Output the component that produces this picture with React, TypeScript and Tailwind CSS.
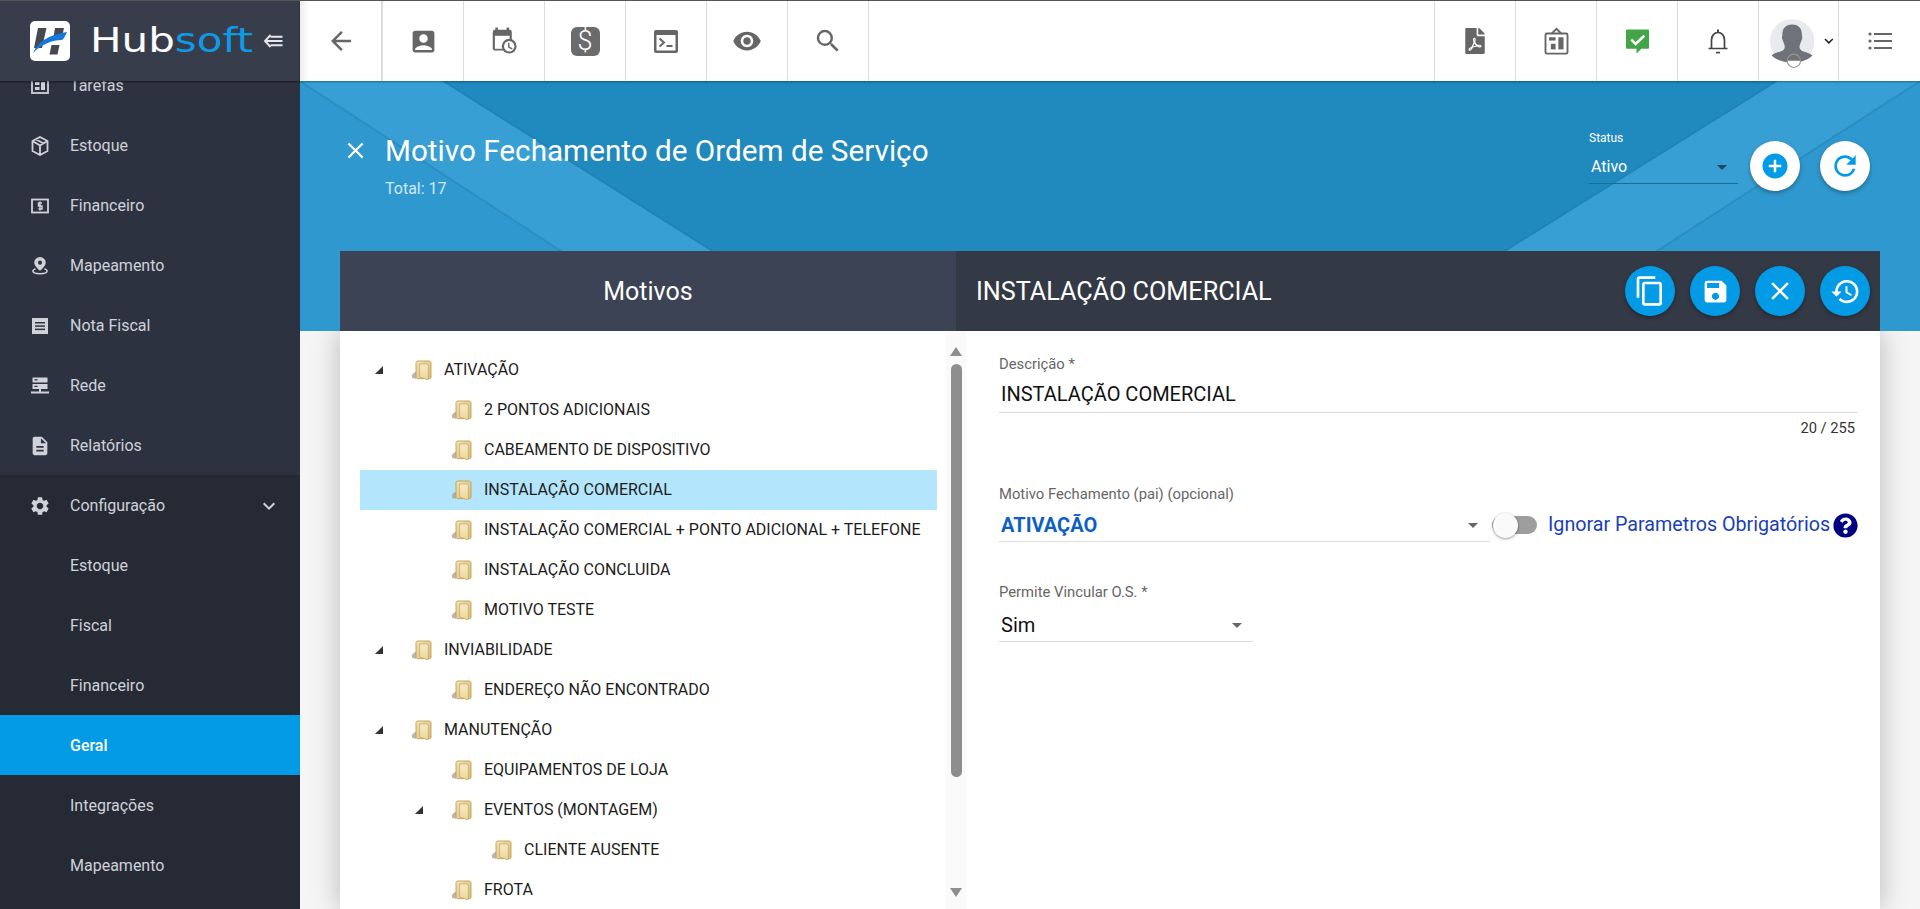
import React from "react";
import {
  MdAccountBox, MdVisibility, MdSearch, MdArrowBack, MdClose, MdExpandMore, MdSettings,
  MdDescription, MdAddCircle, MdRefresh, MdContentCopy, MdSave, MdHistory,
  MdArrowDropDown,
} from "react-icons/md";
import { FaFilePdf, FaQuestionCircle } from "react-icons/fa";

const Cal = () => (
  <svg viewBox="0 0 30 32" className="w-[26px] h-[28px]" fill="#666">
    <rect x="2" y="3" width="22" height="24" rx="2.5" />
    <rect x="5" y="0.5" width="3" height="5" /><rect x="18" y="0.5" width="3" height="5" />
    <rect x="4.5" y="10" width="17" height="15" fill="#fff" />
    <circle cx="21" cy="22" r="8.5" fill="#666" /><circle cx="21" cy="22" r="6" fill="#fff" />
    <path d="M20.5 18v5l4 2" fill="none" stroke="#666" strokeWidth="1.6" />
  </svg>
);
const Term = () => (
  <svg viewBox="0 0 24 23" className="w-6 h-[23px]">
    <rect width="24" height="23" rx="2" fill="#666" />
    <rect x="2.5" y="5" width="19" height="15.500" fill="#fff" />
    <path d="M5.500 8.500l4.500 4-4.500 4" fill="none" stroke="#666" strokeWidth="2" />
    <rect x="12.500" y="15" width="6" height="2" fill="#666" />
  </svg>
);
const Board = () => (
  <svg viewBox="0 0 26 30" className="w-[25px] h-[28px]" fill="none" stroke="#666" strokeWidth="2">
    <rect x="1.2" y="7" width="23.6" height="21.5" rx="1.5" />
    <path d="M8 7l5-5 5 5" />
    <g fill="#666" stroke="none"><rect x="5" y="11" width="7" height="3.5" /><rect x="7" y="18" width="5" height="6" /><rect x="15" y="11" width="5.5" height="13" /></g>
  </svg>
);
const Chat = () => (
  <svg viewBox="0 0 26 26" className="w-[25px] h-[25px]">
    <path d="M2 0.500h22a1 1 0 011 1v18a1 1 0 01-1 1h-7l-5 5v-5H2a1 1 0 01-1-1v-18a1 1 0 011-1z" fill="#43a547" />
    <path d="M6.500 11l4.500 4.500 9-8.500" fill="none" stroke="#fff" strokeWidth="2.600" />
  </svg>
);
const Bell = () => (
  <svg viewBox="0 0 20 25" className="w-5 h-[25px]" fill="none" stroke="#444" strokeWidth="1.700">
    <path d="M3.500 19v-8c0-4.500 2.800-7.500 6.500-7.500s6.500 3 6.500 7.500v8M0.500 19.500h19" />
    <path d="M10 0.500v3" strokeWidth="2" />
    <rect x="8" y="22.800" width="4" height="1.600" fill="#444" stroke="none" />
  </svg>
);
const Avatar = () => (
  <svg viewBox="0 0 50 55" className="w-[50px] h-[55px]">
    <ellipse cx="25" cy="25" rx="25" ry="25" fill="#e9eaee" />
    <path d="M25 6c8 0 11 5 11 11 0 2 1 3 0 6-1 2-1 3-2 5-1 3-1 5 1 7 3 2 10 3 13 6-4 4-11 8-23 8S6 45 2 41c3-3 10-4 13-6 2-2 2-4 1-7-1-2-1-3-2-5-1-3 0-4 0-6 0-6 3-11 11-11z" fill="#6f7379" />
    <path d="M19.500 47a7.500 7.500 0 0015 0z" fill="#fff" />
    <ellipse cx="27" cy="47" rx="7.500" ry="7.500" fill="none" stroke="#99948a" strokeWidth="1.200" />
  </svg>
);
const ListIcon = () => (
  <svg viewBox="0 0 24 18" className="w-[24px] h-[18px]" fill="#666">
    <circle cx="2" cy="2" r="1.6" /><circle cx="2" cy="9" r="1.6" /><circle cx="2" cy="16" r="1.6" />
    <rect x="6" y="1" width="18" height="2" /><rect x="6" y="8" width="18" height="2" /><rect x="6" y="15" width="18" height="2" />
  </svg>
);
const Logo = () => (
  <svg viewBox="0 0 40 40" className="w-10 h-10 shrink-0">
    <rect width="40" height="40" rx="5" fill="#fff" />
    <path d="M8 7h8.500l-4.500 20H4zM25 7h9l-2 9h-8.500zM21.500 24h8l-2 9.500h-8z" fill="#46494f" />
    <path d="M3 32C8 21 18 14 37 11c-2 4-3 6.500-5 8-10 0-20 4-29 13z" fill="#1577dd" />
  </svg>
);
const Collapse = () => (
  <svg viewBox="0 0 20 14" className="w-[21px] h-[14px]" fill="none" stroke="#e5e7eb" strokeWidth="1.900">
    <path d="M7 1L1.500 7 7 13M2 7h17M7 2.800h12M7 11.200h12" />
  </svg>
);

const Folder = () => (
  <svg viewBox="0 0 21 20" className="w-[21px] h-5 shrink-0 -ml-[1px]">
    <defs>
      <linearGradient id="fg" x1="0" y1="0" x2="1" y2="1"><stop offset="0" stopColor="#f3e3b2" /><stop offset="1" stopColor="#d9bb72" /></linearGradient>
      <linearGradient id="fh" x1="0" y1="0" x2="0" y2="1"><stop offset="0" stopColor="#f6ebc8" /><stop offset="1" stopColor="#ecd699" /></linearGradient>
    </defs>
    <path d="M5 2.500C5 1.500 6 1 7 1h11c1 0 2 .6 2 2v14c0 1-.8 1.600-1.600 1.600H7C6 18.600 5 18 5 17z" fill="url(#fg)" stroke="#bf9f58" strokeWidth=".9" />
    <path d="M8.500 4h7.500c.8 0 1.300.5 1.300 1.300v14c0 .4-.3.7-.7.4L10 17.500c-.8-.3-1.500-.8-1.500-1.600z" fill="url(#fh)" stroke="#c4a35c" strokeWidth=".7" />
    <path d="M1 15.500c.6-2 2.500-3.500 4-3.500v6.500H2.500C1.300 18.500.7 17 1 15.500z" fill="#a9a394" opacity=".8" />
  </svg>
);

const Tri = () => (
  <svg viewBox="0 0 8 8" className="w-2 h-2"><path d="M8 0v8H0z" fill="#333" /></svg>
);

const toolbarLeft = [
  <MdAccountBox key="a" className="w-[29px] h-[29px] text-[#666]" />,
  <Cal key="b" />,
  <div key="c" className="w-[29px] h-[29px] rounded-[6px] bg-[#6b6b6b] flex items-center justify-center text-white text-[27px] font-light leading-none">$</div>,
  <Term key="d" />,
  <MdVisibility key="e" className="w-[30px] h-[30px] text-[#666]" />,
  <MdSearch key="f" className="w-[30px] h-[30px] text-[#666]" />,
];
const toolbarRight = [
  <FaFilePdf key="a" className="w-[20px] h-[26px] text-[#666]" />,
  <Board key="b" />,
  <Chat key="c" />,
  <Bell key="d" />,
];

const SideIcon = ({ k }: { k: string }) => {
  const c = "w-[18px] h-[18px]";
  if (k === "tarefas") return (
    <svg viewBox="0 0 18 18" className={c} fill="none" stroke="#cfd2d9" strokeWidth="1.8"><rect x="1" y="2" width="16" height="14" /><g fill="#cfd2d9" stroke="none"><rect x="4" y="5" width="4.500" height="3" /><rect x="4" y="10" width="4.500" height="3" /><rect x="10" y="5" width="4" height="8" /></g></svg>
  );
  if (k === "estoque") return (
    <svg viewBox="0 0 18 20" className="w-[18px] h-5" fill="none" stroke="#cfd2d9" strokeWidth="1.8"><path d="M9 1l7.500 4v10L9 19l-7.500-4V5zM1.500 5L9 9.500 16.500 5M9 9.500V19M5 3.200l7.500 4.300" /></svg>
  );
  if (k === "fin") return (
    <svg viewBox="0 0 18 18" className={c} fill="none" stroke="#cfd2d9" strokeWidth="1.800"><rect x="1" y="2.500" width="16" height="13" /><path d="M11 6H7.500v3H11v3H7.500M9 4.500v9" strokeWidth="1.400" /></svg>
  );
  if (k === "map") return (
    <svg viewBox="0 0 18 20" className="w-[16px] h-[19px]">
      <path d="M9 0.500a6.500 6.500 0 00-6.500 6.500C2.500 11 9 16 9 16s6.500-5 6.500-9A6.500 6.500 0 009 .5z" fill="#cfd2d9" />
      <circle cx="9" cy="6.800" r="2.300" fill="#2d3240" />
      <path d="M4 13.500c-2 .8-3 1.800-3 2.800 0 1.800 3.500 3 8 3s8-1.200 8-3c0-1-1-2-3-2.800" fill="none" stroke="#cfd2d9" strokeWidth="1.700" />
    </svg>
  );
  if (k === "nota") return (
    <svg viewBox="0 0 18 18" className={c} fill="#cfd2d9"><rect x="1" y="1" width="16" height="16" /><g fill="#2d3240"><rect x="4" y="5" width="10" height="1.500" /><rect x="4" y="8.300" width="10" height="1.500" /><rect x="4" y="11.600" width="10" height="1.500" /></g></svg>
  );
  if (k === "rede") return (
    <svg viewBox="0 0 18 18" className={c} fill="#cfd2d9"><rect x="1.500" y="0.500" width="15" height="5" /><rect x="1.500" y="7" width="15" height="5" /><rect x="8" y="12" width="2" height="3" /><rect y="14.500" width="18" height="2" /><g fill="#2d3240"><rect x="3.500" y="2.200" width="3" height="1.200" /><rect x="3.500" y="8.800" width="3" height="1.200" /></g></svg>
  );
  if (k === "rel") return <MdDescription className="w-[22px] h-[22px] text-[#cfd2d9]" />;
  if (k === "conf") return <MdSettings className="w-[22px] h-[22px] text-[#cfd2d9]" />;
  return null;
};

const mainItems = [
  ["Tarefas", "tarefas"], ["Estoque", "estoque"], ["Financeiro", "fin"], ["Mapeamento", "map"],
  ["Nota Fiscal", "nota"], ["Rede", "rede"], ["Relatórios", "rel"],
];
const subItems = ["Estoque", "Fiscal", "Financeiro", "Geral", "Integrações", "Mapeamento"];

const tree: [string, number, boolean, boolean?][] = [
  ["ATIVAÇÃO", 0, true],
  ["2 PONTOS ADICIONAIS", 1, false],
  ["CABEAMENTO DE DISPOSITIVO", 1, false],
  ["INSTALAÇÃO COMERCIAL", 1, false, true],
  ["INSTALAÇÃO COMERCIAL + PONTO ADICIONAL + TELEFONE", 1, false],
  ["INSTALAÇÃO CONCLUIDA", 1, false],
  ["MOTIVO TESTE", 1, false],
  ["INVIABILIDADE", 0, true],
  ["ENDEREÇO NÃO ENCONTRADO", 1, false],
  ["MANUTENÇÃO", 0, true],
  ["EQUIPAMENTOS DE LOJA", 1, false],
  ["EVENTOS (MONTAGEM)", 1, true],
  ["CLIENTE AUSENTE", 2, false],
  ["FROTA", 1, false],
];

const Round = ({ children }: { children: React.ReactNode }) => (
  <button className="w-[50px] h-[50px] rounded-full bg-[#039be5] flex items-center justify-center text-white shadow-[0_2px_4px_rgba(0,0,0,0.3)]">{children}</button>
);
const ToolCell = ({ children, border = "r" }: { children: React.ReactNode; border?: string }) => (
  <div className={`w-[81px] h-full flex items-center justify-center ${border === "r" ? "border-r" : "border-l"} border-[#dcdcdc]`}>{children}</div>
);

export default function App() {
  return (
    <div className="w-[1920px] h-[909px] flex overflow-hidden font-[Roboto,sans-serif] bg-[#f5f5f5] border-t border-[#555]">
      <aside className="w-[300px] shrink-0 flex flex-col bg-[#2d3240] overflow-hidden relative">
        <div className="h-[80px] shrink-0 bg-[#383d4b] flex items-center pl-[30px] relative z-10 shadow-[0_1px_2px_rgba(0,0,0,0.5)]">
          <Logo />
          <span className="ml-[20px] pb-[2px] w-[163px] shrink-0 whitespace-nowrap inline-block origin-left scale-x-[1.235] text-[34px] leading-none font-[DejaVu_Sans,sans-serif] text-white">Hub<span className="text-[#0f9ae6]">soft</span></span>
          <span className="ml-[10px]"><Collapse /></span>
        </div>
        <nav className="-mt-[26px] flex-1 flex flex-col text-[16px] text-[#cfd2d9]">
          {mainItems.map(([t, k]) => (
            <div key={t} className="h-[60px] shrink-0 flex items-center pl-[20px] pt-[1px]">
              <span className="w-[40px] mr-[10px] flex justify-center"><SideIcon k={k} /></span>
              <span>{t}</span>
            </div>
          ))}
          <div className="bg-[#262a35] flex-1">
            <div className="h-[60px] flex items-center pl-[20px] pt-[1px]">
              <span className="w-[40px] mr-[10px] flex justify-center"><SideIcon k="conf" /></span>
              <span className="flex-1">Configuração</span>
              <MdExpandMore className="w-6 h-6 mr-[19px]" />
            </div>
            {subItems.map((t) => (
              <div key={t + "s"} className={`h-[60px] pl-[70px] pt-[1px] flex items-center ${t === "Geral" ? "bg-[#039be5] text-white font-medium" : ""}`}>{t}</div>
            ))}
          </div>
        </nav>
      </aside>

      <main className="flex-1 min-w-0 flex flex-col">
        <header className="h-[80px] shrink-0 bg-white flex items-center relative z-20 shadow-[0_1px_2px_rgba(0,0,0,0.35),inset_12px_0_10px_-10px_rgba(0,0,0,0.12)]">
          <div className="w-[83px] h-full flex items-center justify-center border-r-2 border-[#dcdcdc]"><MdArrowBack className="w-[30px] h-[30px] text-[#666]" /></div>
          {toolbarLeft.map((ic, i) => <ToolCell key={i}>{ic}</ToolCell>)}
          <div className="flex-1" />
          {toolbarRight.map((ic, i) => <ToolCell key={i} border="l">{ic}</ToolCell>)}
          <div className="w-[81px] h-full flex items-start pt-[15px] pl-[11px] gap-[6px] border-l border-r border-[#dcdcdc]"><Avatar /><MdExpandMore className="w-5 h-5 mt-[15px] text-[#222]" /></div>
          <div className="w-[81px] h-full flex items-center justify-center"><ListIcon /></div>
        </header>

        <section className="h-[250px] shrink-0 relative z-10 bg-[#2089bd] flex flex-col">
          <svg viewBox="0 0 1620 250" preserveAspectRatio="none" className="absolute inset-0 w-full h-full">
            <polygon points="0,0 384,250 0,250" fill="#2f98ce" />
            <polygon points="0,0 142,0 538,250 384,250" fill="#389fd4" />
            <polygon points="1478,0 1620,0 1233,250 1078,250" fill="#389fd4" />
            <polygon points="1620,0 1620,250 1233,250" fill="#2f98ce" />
            <g stroke="#1a6f9c" strokeOpacity=".25" strokeWidth="2">
              <line x1="0" y1="0" x2="384" y2="250" />
              <line x1="143" y1="0" x2="539" y2="250" />
              <line x1="1477" y1="0" x2="1077" y2="250" />
              <line x1="1620" y1="0" x2="1233" y2="250" />
            </g>
          </svg>
          <div className="relative flex-1 flex items-start justify-between pl-[42px] pr-[50px]">
            <div className="flex items-start pt-[52px]">
              <MdClose className="w-[27px] h-[27px] text-white mt-[4px]" />
              <div className="ml-[16px]">
                <h1 className="text-[29.700px] leading-[36px] text-white font-normal">Motivo Fechamento de Ordem de Serviço</h1>
                <p className="mt-[11px] text-[16px] leading-[18px] text-[#cfe8f5]">Total: 17</p>
              </div>
            </div>
            <div className="flex items-start pt-[60px]">
              <div className="w-[149px] relative mr-[12px]">
                <div className="text-[12px] leading-[14px] text-white -mt-[10px]">Status</div>
                <div className="h-[34px] mt-[5px] border-b border-[#1a6f99] flex items-center justify-between pl-[2px] text-[16px] text-white">
                  <span>Ativo</span>
                  <MdArrowDropDown className="w-6 h-6 text-[#1c4a63] mr-[4px]" />
                </div>
              </div>
              <button className="w-[50px] h-[50px] rounded-full bg-white flex items-center justify-center shadow-[0_2px_4px_rgba(0,0,0,0.3)]"><MdAddCircle className="w-[30px] h-[30px] text-[#039be5]" /></button>
              <button className="ml-[20px] w-[50px] h-[50px] rounded-full bg-white flex items-center justify-center shadow-[0_2px_4px_rgba(0,0,0,0.3)]"><MdRefresh className="w-[32px] h-[32px] text-[#039be5]" /></button>
            </div>
          </div>
          <div className="relative mx-[40px] h-[80px] shrink-0 flex text-white">
            <div className="w-[616px] bg-[#3c4354] flex items-center justify-center text-[25px] font-normal pt-[2px]">Motivos</div>
            <div className="flex-1 bg-[#343946] flex items-center justify-between pl-[20px] pr-[10px]">
              <span className="text-[25.200px] pt-[2px]">INSTALAÇÃO COMERCIAL</span>
              <div className="flex gap-[15px]">
                <Round><MdContentCopy className="w-[32px] h-[32px]" /></Round>
                <Round><MdSave className="w-[29px] h-[29px]" /></Round>
                <Round><MdClose className="w-[30px] h-[30px]" /></Round>
                <Round><MdHistory className="w-[31px] h-[31px]" /></Round>
              </div>
            </div>
          </div>
        </section>

        <section className="flex-1 min-h-0 mx-[40px] bg-white flex shadow-[0_0_26px_rgba(0,0,0,0.25)]">
          <div className="w-[626px] shrink-0 flex overflow-hidden">
            <div className="flex-1 pt-[19px] pl-[20px] pr-[9px]">
              {tree.map(([t, d, open, sel]) => (
                <div key={t} className={`h-[40px] flex items-center text-[16px] text-[#1c1c1c] ${sel ? "bg-[#b3e5fc]" : ""}`} style={{ paddingLeft: d * 40 }}>
                  <span className="w-[52px] pl-[15px] flex items-center">{open && <Tri />}</span>
                  <Folder />
                  <span className="ml-[12px] whitespace-nowrap">{t}</span>
                </div>
              ))}
            </div>
            <div className="w-[20px] shrink-0 bg-[#fafafa] flex flex-col items-center pt-[16px]">
              <span className="w-0 h-0 border-x-[6px] border-x-transparent border-b-[9px] border-b-[#8e8e8e]" />
              <span className="mt-[8px] w-[11px] h-[413px] rounded-[6px] bg-[#8e8e8e]" />
              <span className="mt-[111px] w-0 h-0 border-x-[6px] border-x-transparent border-t-[9px] border-t-[#8e8e8e]" />
            </div>
          </div>
          <div className="flex-1 min-w-0 pl-[33px] pr-[22px] pt-[25px]">
            <label className="block text-[14.800px] leading-[16px] text-[#666]">Descrição *</label>
            <div className="h-[35px] mt-[6px] border-b border-[#dcdcdc] flex items-center pl-[2px] pb-[3px] text-[20px] text-[#111]">INSTALAÇÃO COMERCIAL</div>
            <div className="text-right pr-[3px] text-[14.700px] leading-[16px] mt-[7px] text-[#333]">20 / 255</div>

            <label className="block mt-[50px] text-[14.800px] leading-[16px] text-[#666]">Motivo Fechamento (pai) (opcional)</label>
            <div className="flex items-center mt-[6px]">
              <div className="w-[491px] h-[34px] shrink-0 border-b border-[#dcdcdc] flex items-center justify-between pl-[2px] pr-[5px] text-[20px] font-bold text-[#0d5fc4]">
                <span>ATIVAÇÃO</span>
                <MdArrowDropDown className="w-6 h-6 text-[#666]" />
              </div>
              <div className="relative w-[45px] h-[18px] shrink-0 ml-[2px] rounded-full bg-[#9e9e9e]">
                <span className="absolute left-[1px] -top-[3px] w-[25px] h-[25px] rounded-full bg-[#fafafa] shadow-[0_1px_3px_rgba(0,0,0,0.4)]" />
              </div>
              <span className="ml-[11px] text-[19.700px] text-[#1a3fb5] whitespace-nowrap">Ignorar Parametros Obrigatórios</span>
              <FaQuestionCircle className="ml-[3px] w-[25px] h-[25px] text-[#000080] shrink-0" />
            </div>

            <label className="block mt-[42px] text-[14.800px] leading-[16px] text-[#666]">Permite Vincular O.S. *</label>
            <div className="w-[254px] h-[34px] mt-[8px] border-b border-[#dcdcdc] flex items-center justify-between pl-[2px] pr-[4px] text-[20px] text-[#111]">
              <span>Sim</span>
              <MdArrowDropDown className="w-6 h-6 text-[#666]" />
            </div>
          </div>
        </section>
      </main>
    </div>
  );
}
